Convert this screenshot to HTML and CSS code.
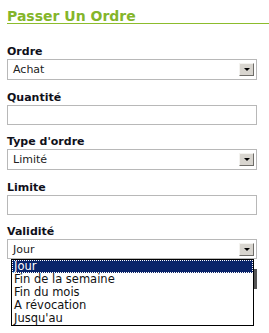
FILE: index.html
```html
<!DOCTYPE html>
<html lang="fr">
<head>
  <meta charset="UTF-8">
  <title>Passer Un Ordre</title>
  <link rel="stylesheet" href="styles.css">
</head>
<body>
  <div class="panel">
    <h2 class="title">Passer Un Ordre</h2>

    <div class="form">
      <label class="label">Ordre</label>
      <div class="select">
        <span>Achat</span>
        <span class="arrow"></span>
      </div>

      <label class="label">Quantité</label>
      <div class="input"></div>

      <label class="label">Type d'ordre</label>
      <div class="select">
        <span>Limité</span>
        <span class="arrow"></span>
      </div>

      <label class="label">Limite</label>
      <div class="input"></div>

      <label class="label">Validité</label>
      <div class="select open">
        <span>Jour</span>
        <span class="arrow"></span>
      </div>
      <div class="dropdown">
        <ul class="options">
          <li class="active">Jour</li>
          <li>Fin de la semaine</li>
          <li>Fin du mois</li>
          <li>A révocation</li>
          <li>Jusqu'au</li>
        </ul>
        <span class="peek"></span>
      </div>
    </div>
  </div>
</body>
</html>
```

FILE: styles.css
```css
body {
  margin: 0;
  background: #fff;
  font-family: "DejaVu Sans", Verdana, sans-serif;
  color: #111;
}

.panel {
  padding: 9px 0 0 7px;
}

.title {
  margin: 0;
  font-size: 14px;
  line-height: 14px;
  font-weight: bold;
  color: #84b52a;
  border-bottom: 1px solid #8cbc2c;
  padding-bottom: 0;
}

.form {
  width: 250px;
  padding-top: 21px;
}

.label {
  display: block;
  font-size: 11px;
  font-weight: bold;
  line-height: 13px;
  color: #10101a;
  margin-bottom: 1px;
}

.select,
.input {
  box-sizing: border-box;
  border: 1px solid #b8b8b8;
  background: #fff;
  margin-bottom: 10px;
}

.select {
  height: 21px;
  margin-bottom: 11px;
  display: flex;
  align-items: center;
  justify-content: space-between;
  padding: 0 2px 0 5px;
  font-size: 11px;
  color: #222;
}

.input {
  height: 20px;
}

.arrow {
  box-sizing: border-box;
  width: 15px;
  height: 13px;
  background: #d8d5cf;
  border-top: 1px solid #f4f3f0;
  border-left: 1px solid #f4f3f0;
  border-right: 1px solid #6f6d69;
  border-bottom: 1px solid #6f6d69;
  position: relative;
}

.arrow::after {
  content: "";
  position: absolute;
  left: 4px;
  top: 4px;
  border-left: 3px solid transparent;
  border-right: 3px solid transparent;
  border-top: 3px solid #000;
}

.select.open {
  height: 20px;
  margin-bottom: 0;
}

.dropdown {
  display: flex;
  align-items: flex-start;
  padding-left: 4px;
}

.options {
  width: 243px;
  margin: 0;
  padding: 0;
  list-style: none;
  box-sizing: border-box;
  border: 1px solid #000;
  background: #fff;
  font-size: 11.5px;
  line-height: 13px;
}

.options li {
  padding-left: 2px;
  color: #111;
}

.options li.active {
  background: #0a246a;
  color: #fff;
  outline: 1px dotted #fff;
  outline-offset: -1px;
}

.peek {
  width: 3px;
  height: 20px;
  margin-top: 10px;
  background: #555;
}
```
